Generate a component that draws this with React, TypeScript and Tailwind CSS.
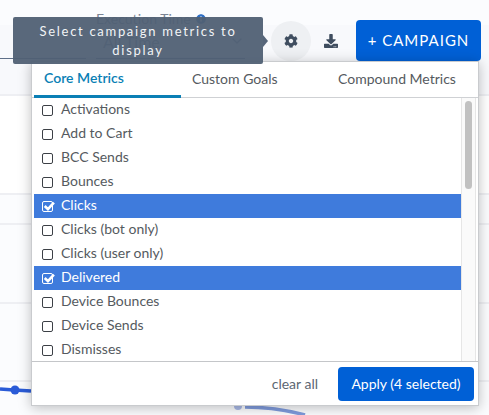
import { FaCog, FaDownload, FaInfoCircle } from "react-icons/fa";
import { ChevronDown } from "lucide-react";

const font = "font-['Lato','Noto_Sans',sans-serif]";

const metrics = [
  { name: "Activations" },
  { name: "Add to Cart" },
  { name: "BCC Sends" },
  { name: "Bounces" },
  { name: "Clicks", checked: true },
  { name: "Clicks (bot only)" },
  { name: "Clicks (user only)" },
  { name: "Delivered", checked: true },
  { name: "Device Bounces" },
  { name: "Device Sends" },
  { name: "Dismisses" },
];

function MetricRow({ name, checked }: { name: string; checked?: boolean }) {
  return (
    <div
      className={`flex h-6 items-center gap-2 pl-2 text-sm ${
        checked ? "bg-[#3f7bdc] text-white" : "text-[#555a60]"
      }`}
    >
      <span
        className={`relative h-[11px] w-[11px] rounded-[2px] border ${
          checked ? "border-white" : "border-[#3c4046]"
        }`}
      >
        {checked && (
          <svg viewBox="0 0 12 12" className="absolute -top-[2px] -left-[1px] h-[13px] w-[13px]">
            <path d="M2.5 5.5 L5.5 8.5 L11 2.5" fill="none" stroke="white" strokeWidth="2.4" />
          </svg>
        )}
      </span>
      <span className="-mt-[2px]">{name}</span>
    </div>
  );
}

export default function App() {
  return (
    <div className={`relative h-[415px] w-[489px] overflow-hidden bg-[#fbfcfe] ${font}`}>
      {/* page behind the popup */}
      <div className="flex h-[94px] items-start bg-[linear-gradient(#fbfcfe_25px,#f8f9fc_25px)]">
        <div className="flex">
          <div className="mt-[25px] h-[34px] w-[86px] border-b border-[#5e6f88]" />
          <div className="ml-[10px] h-[59px] w-[149px] border-b border-[#5e6f88] pt-[10px] text-[#7a8494]">
            <div className="flex items-center gap-[5px] text-sm leading-[18px]">
              Execution Time
              <FaInfoCircle className="text-[10px] text-[#2f6fc4]" />
            </div>
            <div className="relative pt-[2px] pl-[7px] text-base">
              All Time
              <ChevronDown className="absolute top-[5px] right-0 h-4 w-4" />
            </div>
          </div>
        </div>
        <div className="mt-5 ml-auto mr-2 flex items-center">
          <div className="flex h-10 w-10 items-center justify-center rounded-full bg-[#eef0f3] text-[#3f4d5f]">
            <FaCog className="text-sm" />
          </div>
          <div className="flex h-10 w-10 items-center justify-center text-[#3f4d5f]">
            <FaDownload className="text-sm" />
          </div>
          <button className="ml-[5px] h-[41px] w-[125px] rounded bg-[#0060d6] text-[15px] tracking-[1px] text-white">
            + CAMPAIGN
          </button>
        </div>
      </div>
      <div className="h-[99px] border-t-2 border-[#eeeff3] bg-white" />
      <div className="h-[30px] border-t-2 border-[#eeeff3]" />
      <div className="h-[79px] border-t-2 border-[#eeeff3]" />
      <div className="h-[78px] border-t-2 border-[#eeeff3]" />
      <div className="border-t-2 border-[#eeeff3]" />
      <svg viewBox="0 0 489 415" className="absolute inset-0 h-full w-full">
        <path d="M0 389 L14 390 L31 391" fill="none" stroke="#2a5bd7" strokeWidth="3.5" />
        <circle cx="15" cy="390" r="4.5" fill="#2a5bd7" />
        <circle cx="238" cy="406" r="4" fill="#a9b9e6" />
        <path d="M245 407 Q275 407 305 415" fill="none" stroke="#7f9bdc" strokeWidth="3.5" />
      </svg>

      {/* metric picker */}
      <div className="absolute top-[61px] left-[31px] flex h-[345px] w-[448px] flex-col border border-[#c9cbce] bg-white shadow-[0_2px_12px_rgba(0,0,0,0.25)]">
        <div className="flex h-[36px] border-b border-[#cfd1d4] pl-[2px] text-sm text-[#555a60]">
          <div className="-mb-px flex w-[147px] items-center border-b-[3px] border-[#0a7fb5] pb-px pl-[10px] font-semibold text-[#0a7fb5]">
            Core Metrics
          </div>
          <div className="flex w-[137px] items-center pb-[2px] pl-[11px]">Custom Goals</div>
          <div className="flex flex-1 items-center justify-center pb-[2px] pr-[2px]">Compound Metrics</div>
        </div>
        <div className="flex min-h-0 flex-1">
          <div className="min-w-0 flex-1 overflow-hidden pl-[2px]">
            {metrics.map((m) => (
              <MetricRow key={m.name} name={m.name} checked={m.checked} />
            ))}
          </div>
          <div className="mr-[2px] w-[15px] border-x border-[#e6e6e6] bg-[#fafafa] px-[3px] pt-[3px]">
            <div className="h-[88px] rounded-full bg-[#c1c1c1]" />
          </div>
        </div>
        <div className="flex h-[44px] items-center justify-end border-t border-[#c4c6c9] pr-[4px] text-sm">
          <span className="mr-[20px] text-[#5c6672]">clear all</span>
          <button className="h-[34px] w-[136px] rounded bg-[#0060d6] text-white">Apply (4 selected)</button>
        </div>
      </div>

      {/* tooltip */}
      <div className="absolute top-[17px] left-[13px] h-[47px] w-[250px] rounded-[2px] bg-[rgba(80,96,116,0.95)] px-3 pt-[5px] text-center text-[13px] leading-[19px] tracking-[1.7px] text-[#f2f4f6]">
        Select campaign metrics to display
        <span className="absolute top-[18px] -right-[5px] h-0 w-0 border-y-[6px] border-l-[5px] border-y-transparent border-l-[#56657a]" />
      </div>
    </div>
  );
}
